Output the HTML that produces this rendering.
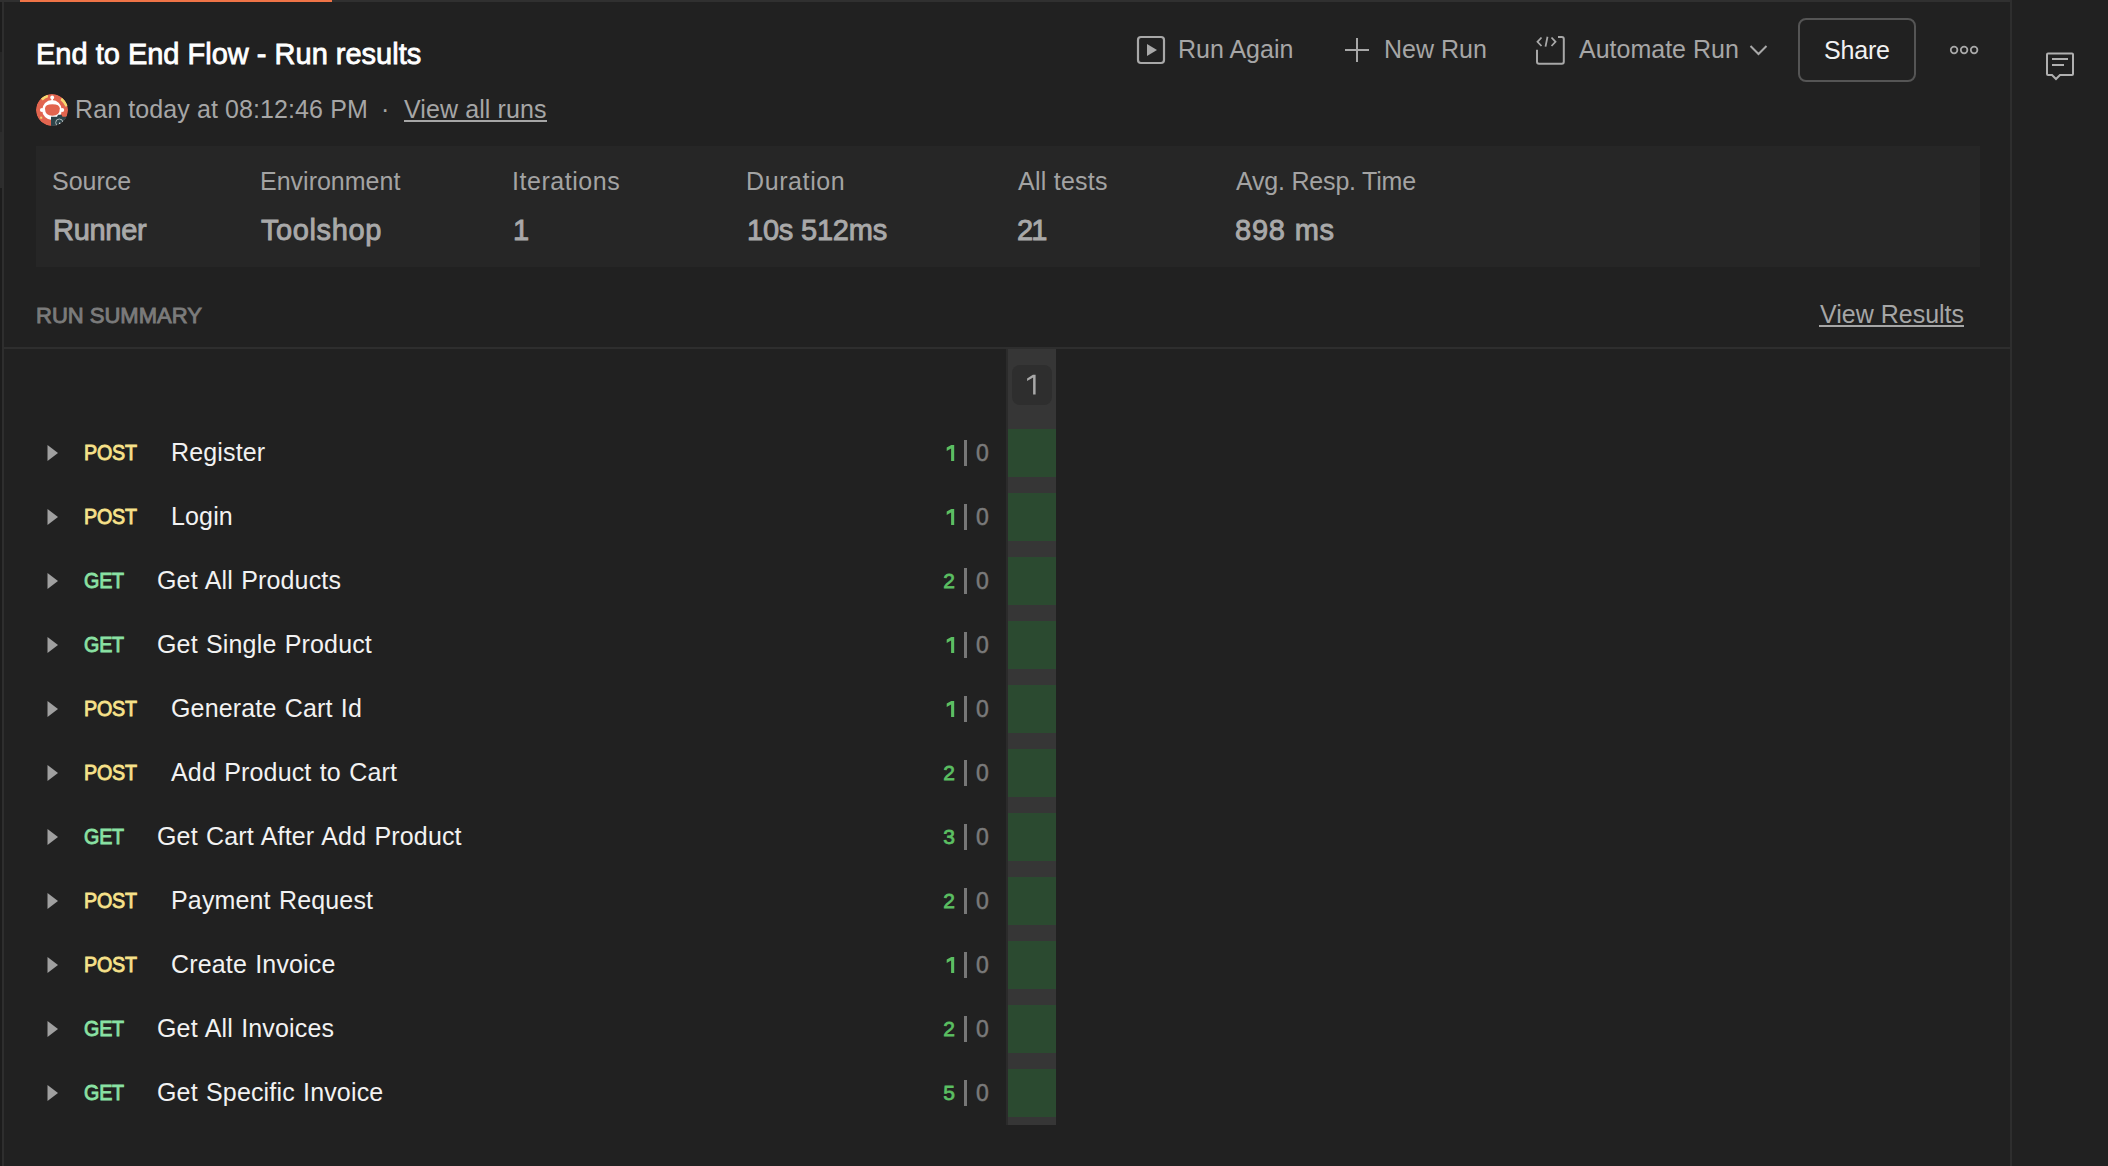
<!DOCTYPE html>
<html><head><meta charset="utf-8">
<style>
html,body{margin:0;padding:0;}
body{width:2108px;height:1166px;overflow:hidden;background:#212121;position:relative;font-family:"Liberation Sans",sans-serif;}
.a{position:absolute;}
.t{position:absolute;white-space:pre;line-height:1;}
.sec{color:#a6a6a6;font-size:25px;}
.name{color:#f2f2f2;font-size:25px;letter-spacing:0.15px;word-spacing:1.2px;}
.m{font-size:22px;font-weight:400;letter-spacing:-0.2px;transform:scaleX(0.895);transform-origin:0 0;-webkit-text-stroke:0.9px currentColor;}
.post{color:#f7e28a;}
.get{color:#8ae2a3;}
.lbl{color:#a3a3a3;font-size:25px;}
.val{color:#a9a9a9;font-size:29px;font-weight:400;-webkit-text-stroke:0.9px #a9a9a9;}
</style></head>
<body>
<!-- left strip -->
<div class="a" style="left:0;top:0;width:2px;height:1166px;background:#1c1c1c"></div>
<div class="a" style="left:2px;top:0;width:2px;height:1166px;background:#2e2e2e"></div>
<div class="a" style="left:0;top:52px;width:2px;height:80px;background:#252525"></div>
<div class="a" style="left:0;top:132px;width:2px;height:56px;background:#2c2c2c"></div>
<!-- top border -->
<div class="a" style="left:0;top:0;width:2010px;height:2px;background:#303030"></div>
<div class="a" style="left:20px;top:0;width:312px;height:2px;background:#f07447"></div>
<!-- right divider -->
<div class="a" style="left:2010px;top:0;width:2px;height:1166px;background:#2e2e2e"></div>

<!-- title -->
<div class="t" style="left:36px;top:40px;font-size:29px;font-weight:400;color:#ffffff;-webkit-text-stroke:0.8px #ffffff">End to End Flow - Run results</div>

<!-- avatar -->
<svg class="a" style="left:36px;top:94px" width="33" height="33" viewBox="0 0 33 33">
  <defs><clipPath id="cc"><circle cx="16" cy="16" r="16"/></clipPath></defs>
  <g clip-path="url(#cc)">
  <circle cx="16" cy="16" r="16" fill="#e2654f"/>
  <path d="M4.8 4.6 Q7.8 1.5 11.8 0.8 L12 3.3 Q9 4.2 6.8 6.6 Z" fill="#f5d870"/>
  <path d="M25.8 3.6 Q30.2 7 32 11.8 L29.6 12.8 Q28 9 24.6 6.2 Z" fill="#f5d870"/>
  <rect x="4.2" y="22.7" width="2" height="2" fill="#f5d870"/>
  <circle cx="16.2" cy="3.4" r="1.9" fill="#fff"/>
  <rect x="15.4" y="3.5" width="1.6" height="3" fill="#fff"/>
  <ellipse cx="16" cy="16" rx="9.8" ry="10" fill="#fff"/>
  <circle cx="6" cy="16" r="2.1" fill="#fff"/>
  <circle cx="26.1" cy="16" r="2.1" fill="#fff"/>
  <path d="M9 14.5 Q9 10.2 16.4 10.2 Q23.8 10.2 23.8 14.5 Q23.8 21.8 16.4 21.8 Q9 21.8 9 14.5 Z" fill="#e2654f"/>
  <path d="M15 22.7 H21 L22 20.8 H25.5 L26.5 22.7 H33 V33 H15 Z" fill="#2d444a"/>
  <circle cx="23.3" cy="28.6" r="3.6" fill="none" stroke="#cfd6d6" stroke-width="0.8"/>
  <circle cx="23.8" cy="29.5" r="0.9" fill="#e8eeee"/>
  </g>
</svg>

<div class="t sec" style="left:75px;top:97px;letter-spacing:0.1px">Ran today at 08:12:46 PM</div>
<div class="t sec" style="left:381px;top:97px">·</div>
<div class="t sec" style="left:404px;top:97px;letter-spacing:0.1px">View all runs</div>
<div class="a" style="left:404px;top:120px;width:143px;height:2px;background:#a6a6a6"></div>

<!-- toolbar -->
<svg class="a" style="left:1136px;top:35px" width="30" height="30" viewBox="0 0 30 30">
  <rect x="2" y="2" width="26" height="26" rx="3" fill="none" stroke="#a8a8a8" stroke-width="2.2"/>
  <path d="M11 9 L21 15 L11 21 Z" fill="#a8a8a8"/>
</svg>
<div class="t sec" style="left:1178px;top:37px">Run Again</div>
<svg class="a" style="left:1344px;top:37px" width="26" height="26" viewBox="0 0 26 26">
  <path d="M13 1 V25 M1 13 H25" stroke="#a8a8a8" stroke-width="2" fill="none"/>
</svg>
<div class="t sec" style="left:1384px;top:37px">New Run</div>
<svg class="a" style="left:1535px;top:35px" width="31" height="31" viewBox="0 0 31 31">
  <path d="M2 14.8 V26.8 Q2 28.8 4 28.8 H26.8 Q28.8 28.8 28.8 26.8 V4 Q28.8 2 26.8 2 H23" fill="none" stroke="#a8a8a8" stroke-width="2"/>
  <path d="M6.5 2.5 L2.5 6.8 L6.5 11 M12.5 1.8 L10.5 11.6 M16.5 2.5 L20.5 6.8 L16.5 11" fill="none" stroke="#a8a8a8" stroke-width="1.8"/>
</svg>
<div class="t sec" style="left:1579px;top:37px">Automate Run</div>
<svg class="a" style="left:1749px;top:44px" width="19" height="13" viewBox="0 0 19 13">
  <path d="M1.5 2 L9.5 10 L17.5 2" fill="none" stroke="#a8a8a8" stroke-width="2"/>
</svg>
<div class="a" style="left:1798px;top:18px;width:114px;height:60px;border:2px solid #555555;border-radius:8px"></div>
<div class="t" style="left:1824px;top:38px;font-size:25px;color:#f2f2f2;letter-spacing:-0.2px">Share</div>
<svg class="a" style="left:1948px;top:43px" width="32" height="14" viewBox="0 0 32 14">
  <circle cx="6.1" cy="7" r="3.3" fill="none" stroke="#a8a8a8" stroke-width="1.8"/>
  <circle cx="16.1" cy="7" r="3.3" fill="none" stroke="#a8a8a8" stroke-width="1.8"/>
  <circle cx="26.1" cy="7" r="3.3" fill="none" stroke="#a8a8a8" stroke-width="1.8"/>
</svg>
<!-- comment icon -->
<svg class="a" style="left:2044px;top:50px" width="32" height="32" viewBox="0 0 32 32">
  <path d="M4 3.5 H28 Q29 3.5 29 4.5 V24 Q29 25 28 25 H16 L12 29 L8 25 H4 Q3 25 3 24 V4.5 Q3 3.5 4 3.5 Z" fill="none" stroke="#b0b0b0" stroke-width="2"/>
  <path d="M8 9 H24 M8 15 H20" stroke="#b0b0b0" stroke-width="2"/>
</svg>

<!-- stats -->
<div class="a" style="left:36px;top:146px;width:1944px;height:121px;background:#262626"></div>
<div class="t lbl" style="left:52px;top:169px">Source</div>
<div class="t lbl" style="left:260px;top:169px">Environment</div>
<div class="t lbl" style="left:512px;top:169px;letter-spacing:0.55px">Iterations</div>
<div class="t lbl" style="left:746px;top:169px;letter-spacing:0.6px">Duration</div>
<div class="t lbl" style="left:1018px;top:169px;letter-spacing:0.25px">All tests</div>
<div class="t lbl" style="left:1236px;top:169px;letter-spacing:-0.2px">Avg. Resp. Time</div>
<div class="t val" style="left:53px;top:216px;letter-spacing:-0.3px">Runner</div>
<div class="t val" style="left:261px;top:216px;letter-spacing:0.6px">Toolshop</div>
<div class="t val" style="left:513px;top:216px">1</div>
<div class="t val" style="left:747px;top:216px;letter-spacing:-0.2px">10s 512ms</div>
<div class="t val" style="left:1017px;top:216px;letter-spacing:-1.8px">21</div>
<div class="t val" style="left:1235px;top:216px;letter-spacing:0.8px">898 ms</div>

<!-- run summary -->
<div class="t" style="left:36px;top:305px;font-size:22px;font-weight:400;color:#7b7b7b;letter-spacing:0px;-webkit-text-stroke:0.9px #7b7b7b">RUN SUMMARY</div>
<div class="t sec" style="left:1820px;top:302px">View Results</div>
<div class="a" style="left:1819px;top:325px;width:145px;height:2px;background:#a6a6a6"></div>
<div class="a" style="left:4px;top:347px;width:2006px;height:2px;background:#2e2e2e"></div>

<!-- iteration column -->
<div class="a" style="left:1006px;top:349px;width:50px;height:776px;background:#363636"></div>
<div class="a" style="left:1006px;top:349px;width:2px;height:776px;background:#2b2b2b"></div>
<div class="a" style="left:1012px;top:365px;width:40px;height:40px;background:#2e2e2e;border-radius:8px"></div>
<svg class="a" style="left:1024px;top:372px" width="14" height="26" viewBox="0 0 14 26"><path d="M8.9 2.7 H11.6 V22.6 H9.1 V5.6 L3.1 8.9 V6.4 Z" fill="#a8a8a8"/></svg>

<div id="rows">
<div class="a" style="left:1008px;top:429px;width:48px;height:48px;background:#2b4a30"></div>
<svg class="a" style="left:47px;top:444px" width="12" height="18" viewBox="0 0 12 18"><path d="M0.5 1 L11 9 L0.5 17 Z" fill="#a0a0a0"/></svg>
<div class="t m post" style="left:84px;top:442px">POST</div>
<div class="t name" style="left:171px;top:440px">Register</div>
<svg class="a" style="left:946px;top:444px" width="10" height="18" viewBox="0 0 10 18"><path d="M0.7 3.6 L5.3 0.9 H8.2 V17.1 H5.1 V4.6 L0.7 7.1 Z" fill="#5bbf62"/></svg>
<div class="a" style="left:964.4px;top:440px;width:2.6px;height:26px;background:#777777"></div>
<div class="t" style="left:976px;top:442px;font-size:23px;color:#7a7a7a;-webkit-text-stroke:0.5px #7a7a7a">0</div>
<div class="a" style="left:1008px;top:493px;width:48px;height:48px;background:#2b4a30"></div>
<svg class="a" style="left:47px;top:508px" width="12" height="18" viewBox="0 0 12 18"><path d="M0.5 1 L11 9 L0.5 17 Z" fill="#a0a0a0"/></svg>
<div class="t m post" style="left:84px;top:506px">POST</div>
<div class="t name" style="left:171px;top:504px">Login</div>
<svg class="a" style="left:946px;top:508px" width="10" height="18" viewBox="0 0 10 18"><path d="M0.7 3.6 L5.3 0.9 H8.2 V17.1 H5.1 V4.6 L0.7 7.1 Z" fill="#5bbf62"/></svg>
<div class="a" style="left:964.4px;top:504px;width:2.6px;height:26px;background:#777777"></div>
<div class="t" style="left:976px;top:506px;font-size:23px;color:#7a7a7a;-webkit-text-stroke:0.5px #7a7a7a">0</div>
<div class="a" style="left:1008px;top:557px;width:48px;height:48px;background:#2b4a30"></div>
<svg class="a" style="left:47px;top:572px" width="12" height="18" viewBox="0 0 12 18"><path d="M0.5 1 L11 9 L0.5 17 Z" fill="#a0a0a0"/></svg>
<div class="t m get" style="left:84px;top:570px">GET</div>
<div class="t name" style="left:157px;top:568px">Get All Products</div>
<div class="t" style="left:929px;top:570px;width:26px;text-align:right;font-size:21px;font-weight:400;color:#5bbf62;-webkit-text-stroke:0.8px #5bbf62">2</div>
<div class="a" style="left:964.4px;top:568px;width:2.6px;height:26px;background:#777777"></div>
<div class="t" style="left:976px;top:570px;font-size:23px;color:#7a7a7a;-webkit-text-stroke:0.5px #7a7a7a">0</div>
<div class="a" style="left:1008px;top:621px;width:48px;height:48px;background:#2b4a30"></div>
<svg class="a" style="left:47px;top:636px" width="12" height="18" viewBox="0 0 12 18"><path d="M0.5 1 L11 9 L0.5 17 Z" fill="#a0a0a0"/></svg>
<div class="t m get" style="left:84px;top:634px">GET</div>
<div class="t name" style="left:157px;top:632px">Get Single Product</div>
<svg class="a" style="left:946px;top:636px" width="10" height="18" viewBox="0 0 10 18"><path d="M0.7 3.6 L5.3 0.9 H8.2 V17.1 H5.1 V4.6 L0.7 7.1 Z" fill="#5bbf62"/></svg>
<div class="a" style="left:964.4px;top:632px;width:2.6px;height:26px;background:#777777"></div>
<div class="t" style="left:976px;top:634px;font-size:23px;color:#7a7a7a;-webkit-text-stroke:0.5px #7a7a7a">0</div>
<div class="a" style="left:1008px;top:685px;width:48px;height:48px;background:#2b4a30"></div>
<svg class="a" style="left:47px;top:700px" width="12" height="18" viewBox="0 0 12 18"><path d="M0.5 1 L11 9 L0.5 17 Z" fill="#a0a0a0"/></svg>
<div class="t m post" style="left:84px;top:698px">POST</div>
<div class="t name" style="left:171px;top:696px">Generate Cart Id</div>
<svg class="a" style="left:946px;top:700px" width="10" height="18" viewBox="0 0 10 18"><path d="M0.7 3.6 L5.3 0.9 H8.2 V17.1 H5.1 V4.6 L0.7 7.1 Z" fill="#5bbf62"/></svg>
<div class="a" style="left:964.4px;top:696px;width:2.6px;height:26px;background:#777777"></div>
<div class="t" style="left:976px;top:698px;font-size:23px;color:#7a7a7a;-webkit-text-stroke:0.5px #7a7a7a">0</div>
<div class="a" style="left:1008px;top:749px;width:48px;height:48px;background:#2b4a30"></div>
<svg class="a" style="left:47px;top:764px" width="12" height="18" viewBox="0 0 12 18"><path d="M0.5 1 L11 9 L0.5 17 Z" fill="#a0a0a0"/></svg>
<div class="t m post" style="left:84px;top:762px">POST</div>
<div class="t name" style="left:171px;top:760px">Add Product to Cart</div>
<div class="t" style="left:929px;top:762px;width:26px;text-align:right;font-size:21px;font-weight:400;color:#5bbf62;-webkit-text-stroke:0.8px #5bbf62">2</div>
<div class="a" style="left:964.4px;top:760px;width:2.6px;height:26px;background:#777777"></div>
<div class="t" style="left:976px;top:762px;font-size:23px;color:#7a7a7a;-webkit-text-stroke:0.5px #7a7a7a">0</div>
<div class="a" style="left:1008px;top:813px;width:48px;height:48px;background:#2b4a30"></div>
<svg class="a" style="left:47px;top:828px" width="12" height="18" viewBox="0 0 12 18"><path d="M0.5 1 L11 9 L0.5 17 Z" fill="#a0a0a0"/></svg>
<div class="t m get" style="left:84px;top:826px">GET</div>
<div class="t name" style="left:157px;top:824px">Get Cart After Add Product</div>
<div class="t" style="left:929px;top:826px;width:26px;text-align:right;font-size:21px;font-weight:400;color:#5bbf62;-webkit-text-stroke:0.8px #5bbf62">3</div>
<div class="a" style="left:964.4px;top:824px;width:2.6px;height:26px;background:#777777"></div>
<div class="t" style="left:976px;top:826px;font-size:23px;color:#7a7a7a;-webkit-text-stroke:0.5px #7a7a7a">0</div>
<div class="a" style="left:1008px;top:877px;width:48px;height:48px;background:#2b4a30"></div>
<svg class="a" style="left:47px;top:892px" width="12" height="18" viewBox="0 0 12 18"><path d="M0.5 1 L11 9 L0.5 17 Z" fill="#a0a0a0"/></svg>
<div class="t m post" style="left:84px;top:890px">POST</div>
<div class="t name" style="left:171px;top:888px">Payment Request</div>
<div class="t" style="left:929px;top:890px;width:26px;text-align:right;font-size:21px;font-weight:400;color:#5bbf62;-webkit-text-stroke:0.8px #5bbf62">2</div>
<div class="a" style="left:964.4px;top:888px;width:2.6px;height:26px;background:#777777"></div>
<div class="t" style="left:976px;top:890px;font-size:23px;color:#7a7a7a;-webkit-text-stroke:0.5px #7a7a7a">0</div>
<div class="a" style="left:1008px;top:941px;width:48px;height:48px;background:#2b4a30"></div>
<svg class="a" style="left:47px;top:956px" width="12" height="18" viewBox="0 0 12 18"><path d="M0.5 1 L11 9 L0.5 17 Z" fill="#a0a0a0"/></svg>
<div class="t m post" style="left:84px;top:954px">POST</div>
<div class="t name" style="left:171px;top:952px">Create Invoice</div>
<svg class="a" style="left:946px;top:956px" width="10" height="18" viewBox="0 0 10 18"><path d="M0.7 3.6 L5.3 0.9 H8.2 V17.1 H5.1 V4.6 L0.7 7.1 Z" fill="#5bbf62"/></svg>
<div class="a" style="left:964.4px;top:952px;width:2.6px;height:26px;background:#777777"></div>
<div class="t" style="left:976px;top:954px;font-size:23px;color:#7a7a7a;-webkit-text-stroke:0.5px #7a7a7a">0</div>
<div class="a" style="left:1008px;top:1005px;width:48px;height:48px;background:#2b4a30"></div>
<svg class="a" style="left:47px;top:1020px" width="12" height="18" viewBox="0 0 12 18"><path d="M0.5 1 L11 9 L0.5 17 Z" fill="#a0a0a0"/></svg>
<div class="t m get" style="left:84px;top:1018px">GET</div>
<div class="t name" style="left:157px;top:1016px">Get All Invoices</div>
<div class="t" style="left:929px;top:1018px;width:26px;text-align:right;font-size:21px;font-weight:400;color:#5bbf62;-webkit-text-stroke:0.8px #5bbf62">2</div>
<div class="a" style="left:964.4px;top:1016px;width:2.6px;height:26px;background:#777777"></div>
<div class="t" style="left:976px;top:1018px;font-size:23px;color:#7a7a7a;-webkit-text-stroke:0.5px #7a7a7a">0</div>
<div class="a" style="left:1008px;top:1069px;width:48px;height:48px;background:#2b4a30"></div>
<svg class="a" style="left:47px;top:1084px" width="12" height="18" viewBox="0 0 12 18"><path d="M0.5 1 L11 9 L0.5 17 Z" fill="#a0a0a0"/></svg>
<div class="t m get" style="left:84px;top:1082px">GET</div>
<div class="t name" style="left:157px;top:1080px">Get Specific Invoice</div>
<div class="t" style="left:929px;top:1082px;width:26px;text-align:right;font-size:21px;font-weight:400;color:#5bbf62;-webkit-text-stroke:0.8px #5bbf62">5</div>
<div class="a" style="left:964.4px;top:1080px;width:2.6px;height:26px;background:#777777"></div>
<div class="t" style="left:976px;top:1082px;font-size:23px;color:#7a7a7a;-webkit-text-stroke:0.5px #7a7a7a">0</div>
</div>
</body></html>
